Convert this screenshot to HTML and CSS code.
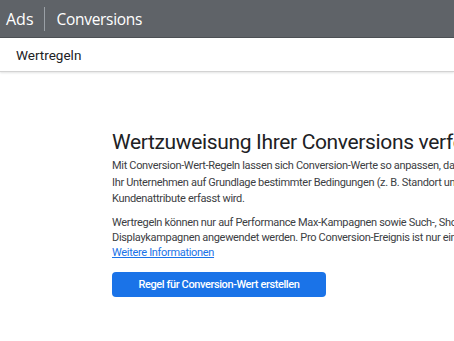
FILE: index.html
```html
<!DOCTYPE html>
<html lang="de">
<head>
    <meta charset="UTF-8">
    <meta name="viewport" content="width=device-width, initial-scale=1.0">
    <title>Wertregeln</title>
    <link rel="stylesheet" href="styles.css">
</head>
<body>
    <header class="topbar">
        <span class="product">Ads</span>
        <span class="divider"></span>
        <span class="section">Conversions</span>
    </header>
    <div class="subbar">Wertregeln</div>
    <main class="empty">
        <h1>Wertzuweisung Ihrer Conversions verfeinern</h1>
        <p>Mit Conversion-Wert-Regeln lassen sich Conversion-Werte so anpassen, dass sie den Wert für<br>
        Ihr Unternehmen auf Grundlage bestimmter Bedingungen (z. B. Standort und Gerät) oder<br>
        Kundenattribute erfasst wird.</p>
        <p class="tight">Wertregeln können nur auf Performance Max-Kampagnen sowie Such-, Shopping- und<br>
        Displaykampagnen angewendet werden. Pro Conversion-Ereignis ist nur eine Regel zulässig.<br>
        <a href="#">Weitere Informationen</a></p>
        <button class="create">Regel für Conversion-Wert erstellen</button>
    </main>
</body>
</html>
```

FILE: styles.css
```css
body {
    margin: 0;
    background-color: #ffffff;
    font-family: Roboto, Arial, sans-serif;
    color: #3c4043;
    overflow: hidden;
}
.topbar {
    height: 37px;
    background-color: #5f6368;
    border-bottom: 1px solid #4d5155;
    display: flex;
    align-items: center;
    padding-left: 6px;
    color: #ffffff;
    font-family: "Open Sans", Roboto, sans-serif;
    font-size: 16px;
}
.divider {
    width: 1px;
    height: 24px;
    background-color: #9aa0a6;
    margin: 0 12px 0 10px;
}
.section {
    font-size: 15.5px;
    letter-spacing: -0.3px;
}
.subbar {
    height: 33px;
    display: flex;
    align-items: center;
    padding-left: 16px;
    font-size: 13.5px;
    color: #202124;
    border-bottom: 1px solid #d3d3d3;
    box-shadow: 0 1px 2px rgba(60, 64, 67, 0.15);
}
.empty {
    padding: 56px 0 0 112px;
    width: 700px;
    white-space: nowrap;
}
h1 {
    font-weight: 400;
    font-size: 21px;
    letter-spacing: -0.35px;
    line-height: 28px;
    color: #202124;
    margin: 0 0 2px;
}
p {
    font-size: 11px;
    letter-spacing: -0.32px;
    line-height: 16.5px;
    margin: 0 0 7px;
}
p.tight {
    line-height: 15px;
}
a {
    color: #1a73e8;
}
.create {
    margin-top: 5px;
    width: 214px;
    height: 25px;
    border: none;
    border-radius: 4px;
    background-color: #1a73e8;
    color: #ffffff;
    font-family: Roboto, sans-serif;
    font-size: 11px;
    font-weight: 500;
    letter-spacing: -0.4px;
}
```
